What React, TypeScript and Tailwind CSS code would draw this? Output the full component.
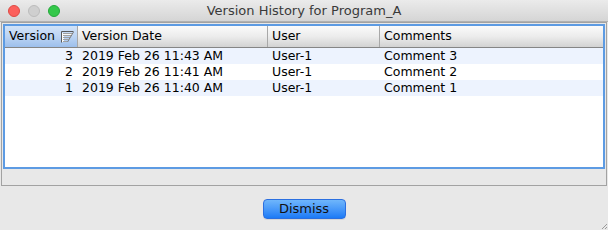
import React from "react";

const ROWS = [
  { version: 3, date: "2019 Feb 26 11:43 AM", user: "User-1", comment: "Comment 3" },
  { version: 2, date: "2019 Feb 26 11:41 AM", user: "User-1", comment: "Comment 2" },
  { version: 1, date: "2019 Feb 26 11:40 AM", user: "User-1", comment: "Comment 1" },
];

const font = { fontFamily: '"DejaVu Sans", "Liberation Sans", sans-serif' };

function SortIcon() {
  return (
    <svg width="13" height="12" viewBox="0 0 13 12" className="shrink-0">
      <path d="M1 2 H12 L11 4 H3 V11 H1 Z" fill="#fafafa" />
      <path d="M0.5 11.5 V0.5 H12.5" fill="none" stroke="#5a5a5a" strokeWidth="1" />
      <path d="M2 2.5 H12 M2 4.5 H10.5 M2 6.5 H9 M2 8.5 H7.5 M2 10.5 H6" stroke="#a0a0a0" strokeWidth="1" />
      <path d="M12.5 1 L6.5 11" stroke="#7a7a7a" strokeWidth="1" />
    </svg>
  );
}

export default function App() {
  return (
    <div className="w-[608px] h-[230px] bg-[#e8e8e8] flex flex-col overflow-hidden text-[12.5px] text-black" style={font}>
      {/* Title bar */}
      <div className="h-[22px] shrink-0 relative flex items-center justify-center bg-gradient-to-b from-[#ebebeb] to-[#d5d5d5] border-b border-[#b1b1b1]">
        <div className="absolute left-[8px] top-[5px] flex gap-[8px]">
          <span className="w-[12px] h-[12px] rounded-full bg-[#fc605c] border border-[#de4a44]" />
          <span className="w-[12px] h-[12px] rounded-full bg-[#cfcfcf] border border-[#bcbcbc]" />
          <span className="w-[12px] h-[12px] rounded-full bg-[#34c84a] border border-[#24a83a]" />
        </div>
        <span className="text-[13px] text-[#3a3a3a]">Version History for Program_A</span>
      </div>

      {/* Table panel */}
      <div className="mx-[1px] h-[164px] shrink-0 border border-[#a2a2a2] flex flex-col">
        <div className="m-[1px] mb-0 h-[145px] border-2 border-[#5d9be3] bg-white flex flex-col">
          {/* Header */}
          <div className="h-[22px] flex border-b border-[#858585] bg-gradient-to-b from-[#fbfbfb] via-[#ececec] to-[#d2d2d2]">
            <div className="w-[73px] flex items-center justify-between pl-[4px] pr-[3px] border-r border-[#a8a8a8] bg-gradient-to-b from-[#d2e3f8] via-[#bcd4f3] to-[#9dbfec]">
              <span>Version</span>
              <SortIcon />
            </div>
            <div className="w-[190px] flex items-center pl-[4px] border-r border-[#a8a8a8]">Version Date</div>
            <div className="w-[112px] flex items-center pl-[4px] border-r border-[#a8a8a8]">User</div>
            <div className="flex-1 flex items-center pl-[4px]">Comments</div>
          </div>
          {/* Rows */}
          {ROWS.map((r, i) => (
            <div key={r.version} className={`h-[16px] flex items-center ${i % 2 === 0 ? "bg-[#edf3fe]" : "bg-white"}`}>
              <div className="w-[73px] text-right pr-[5px]">{r.version}</div>
              <div className="w-[190px] pl-[4px]">{r.date}</div>
              <div className="w-[112px] pl-[4px]">{r.user}</div>
              <div className="flex-1 pl-[4px]">{r.comment}</div>
            </div>
          ))}
        </div>
        <div className="flex-1 bg-[#e8e8e8]" />
      </div>

      {/* Footer */}
      <div className="flex-1 flex items-start justify-center pt-[13px] relative">
        <button className="w-[83px] h-[20px] rounded-[4px] border border-[#2b6fe0] bg-gradient-to-b from-[#6fb6fb] to-[#1a7af6] text-[13px] text-[#111] flex items-center justify-center shadow-[0_1px_0_rgba(0,0,0,0.08)]">
          Dismiss
        </button>
        <svg width="6" height="6" viewBox="0 0 6 6" className="absolute right-[1px] bottom-[1px]">
          <path d="M6 1 L1 6 M6 4 L4 6" stroke="#9a9a9a" strokeWidth="1" />
        </svg>
      </div>
    </div>
  );
}
